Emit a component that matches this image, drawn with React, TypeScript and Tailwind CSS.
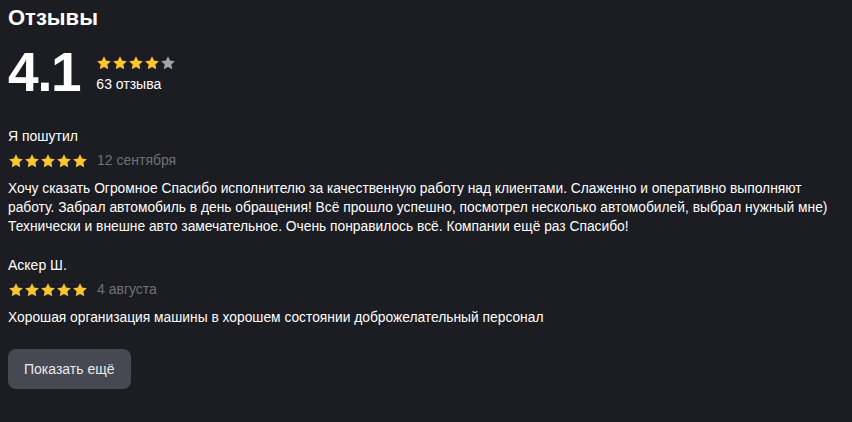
import React from "react";

const font = { fontFamily: '"Liberation Sans", Arial, sans-serif' };

function Star({ filled = true, size = 16 }: { filled?: boolean; size?: number }) {
  return (
    <svg width={size} height={size} viewBox="0 0 24 24">
      <path
        d="M12 1.8l3.1 6.6 7.2.9-5.3 5 1.4 7.1L12 17.9l-6.4 3.5L7 14.3l-5.3-5 7.2-.9z"
        fill={filled ? "#fcc630" : "#a3a3a6"}
      />
    </svg>
  );
}

function Stars({ count, size }: { count: number; size: number }) {
  return (
    <div className="flex items-center">
      {[0, 1, 2, 3, 4].map((i) => (
        <Star key={i} filled={i < count} size={size} />
      ))}
    </div>
  );
}

const reviews = [
  {
    id: 1,
    author: "Я пошутил",
    date: "12 сентября",
    text: "Хочу сказать Огромное Спасибо исполнителю за качественную работу над клиентами. Слаженно и оперативно выполняют работу. Забрал автомобиль в день обращения! Всё прошло успешно, посмотрел несколько автомобилей, выбрал нужный мне) Технически и внешне авто замечательное. Очень понравилось всё. Компании ещё раз Спасибо!",
  },
  {
    id: 2,
    author: "Аскер Ш.",
    date: "4 августа",
    text: "Хорошая организация машины в хорошем состоянии доброжелательный персонал",
  },
];

export default function App() {
  return (
    <div className="w-[852px] h-[422px] bg-[#1c1d22] text-white px-2 pt-[4px]" style={font}>
      <h2 className="text-[22px] leading-[28px] font-bold">Отзывы</h2>

      <div className="flex items-center mt-[14px]">
        <span className="text-[55px] leading-[52px] font-bold tracking-tight">4.1</span>
        <div className="ml-[16px] flex flex-col gap-[5px] pt-[2px]">
          <Stars count={4} size={16} />
          <span className="text-[14px] leading-[16px]">63 отзыва</span>
        </div>
      </div>

      <div className="mt-[29px] flex flex-col gap-[20px]">
        {reviews.map((r) => (
          <div key={r.id}>
            <p className="text-[14px] leading-[18px]">{r.author}</p>
            <div className="flex items-center mt-[5px]">
              <Stars count={5} size={16} />
              <span className="ml-[9px] text-[14px] text-[#6f7177]">{r.date}</span>
            </div>
            <p className="mt-[8px] text-[13.8px] leading-[19px]">{r.text}</p>
          </div>
        ))}
      </div>

      <button className="mt-[22px] h-[40px] px-[16px] rounded-lg bg-[#464952] text-[14px] text-[#e8e9eb]">
        Показать ещё
      </button>
    </div>
  );
}
